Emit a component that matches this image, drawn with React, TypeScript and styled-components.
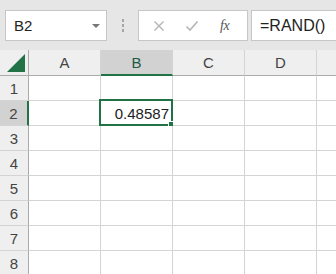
import React from "react";
import styled, { createGlobalStyle } from "styled-components";

const Global = createGlobalStyle`
  html, body { margin: 0; padding: 0; background: #ffffff; overflow: hidden; }
  body { font-family: "Liberation Sans", "Noto Sans CJK JP", sans-serif; }
`;

const Page = styled.div`
  width: 336px;
  height: 274px;
  overflow: hidden;
  display: flex;
  flex-direction: column;
`;

const TopBar = styled.div`
  height: 50px;
  flex: none;
  background: #e6e6e6;
  display: flex;
  align-items: flex-start;
  padding-top: 10px;
  padding-left: 5px;
  box-sizing: border-box;
`;

const NameBox = styled.div`
  width: 102px;
  height: 31px;
  box-sizing: border-box;
  background: #fff;
  border: 1px solid #c6c6c6;
  display: flex;
  align-items: center;
  justify-content: space-between;
  padding: 0 6px 0 8px;
  font-size: 15px;
  color: #222;
`;

const Caret = styled.span`
  width: 0;
  height: 0;
  border-left: 4px solid transparent;
  border-right: 4px solid transparent;
  border-top: 4px solid #777;
`;

const Grip = styled.div`
  width: 31px;
  height: 31px;
  display: flex;
  flex-direction: column;
  align-items: center;
  justify-content: center;
  gap: 2px;
`;

const Dot = styled.span`
  width: 2px;
  height: 3px;
  background: #a6a6a6;
`;

const ActionBox = styled.div`
  width: 110px;
  height: 31px;
  box-sizing: border-box;
  background: #fff;
  border: 1px solid #c6c6c6;
  display: flex;
  align-items: center;
  justify-content: space-around;
  padding: 0 6px 0 4px;
`;

const IconSlot = styled.span`
  width: 24px;
  display: flex;
  justify-content: center;
  align-items: center;
`;

const Fx = styled.span`
  font-family: "Liberation Serif", serif;
  font-style: italic;
  font-size: 14px;
  color: #555;
  letter-spacing: -0.5px;
`;

const FormulaBox = styled.div`
  flex: 1;
  height: 31px;
  margin-left: 3px;
  box-sizing: border-box;
  background: #fff;
  border: 1px solid #c6c6c6;
  border-right: none;
  display: flex;
  align-items: center;
  padding-left: 8px;
  font-size: 16px;
  color: #222;
`;

const Grid = styled.div`
  display: grid;
  grid-template-columns: 29px 72px 72px 72px 72px 72px;
  grid-auto-rows: 25px;
  grid-template-rows: 26px;
`;

const Corner = styled.div`
  background: #efefef;
  border-right: 1px solid #ababab;
  border-bottom: 1px solid #ababab;
  box-sizing: border-box;
  display: flex;
  align-items: flex-end;
  justify-content: flex-end;
  padding: 0 3px 3px 0;
`;

const ColHead = styled.div<{ $sel?: boolean }>`
  box-sizing: border-box;
  background: ${(p) => (p.$sel ? "#d2d2d2" : "#efefef")};
  border-right: 1px solid #d4d4d4;
  border-bottom: ${(p) => (p.$sel ? "2px solid #217346" : "1px solid #ababab")};
  display: flex;
  align-items: center;
  justify-content: center;
  font-size: 15px;
  color: ${(p) => (p.$sel ? "#1d5a45" : "#444")};
  padding-top: ${(p) => (p.$sel ? "1px" : "0")};
`;

const RowHead = styled.div<{ $sel?: boolean }>`
  box-sizing: border-box;
  background: ${(p) => (p.$sel ? "#d2d2d2" : "#efefef")};
  border-right: ${(p) => (p.$sel ? "2px solid #217346" : "1px solid #ababab")};
  border-bottom: 1px solid #d4d4d4;
  display: flex;
  align-items: center;
  justify-content: center;
  font-size: 15px;
  color: #444;
`;

const Cell = styled.div`
  position: relative;
  box-sizing: border-box;
  background: #fff;
  border-right: 1px solid #d4d4d4;
  border-bottom: 1px solid #d4d4d4;
  display: flex;
  align-items: center;
  justify-content: flex-end;
  padding-right: 3px;
  font-size: 15px;
  color: #222;
`;

const Selection = styled.div`
  position: absolute;
  left: -2px;
  top: -2px;
  right: -1px;
  bottom: -1px;
  border: 2px solid #217346;
  pointer-events: none;
`;

const Handle = styled.div`
  position: absolute;
  right: -4px;
  bottom: -4px;
  width: 5px;
  height: 5px;
  background: #217346;
  border: 1px solid #fff;
`;

const Value = styled.span`
  position: relative;
  z-index: 1;
`;

const cols = ["A", "B", "C", "D", ""];
const rows = [1, 2, 3, 4, 5, 6, 7, 8];

export default function App() {
  return (
    <Page>
      <Global />
      <TopBar>
        <NameBox>
          <span>B2</span>
          <Caret />
        </NameBox>
        <Grip>
          <Dot />
          <Dot />
          <Dot />
        </Grip>
        <ActionBox>
          <IconSlot>
            <svg width="12" height="12" viewBox="0 0 12 12">
              <path d="M1.5 1.5 L10.5 10.5 M10.5 1.5 L1.5 10.5" stroke="#b5b5b5" strokeWidth="1.4" fill="none" />
            </svg>
          </IconSlot>
          <IconSlot>
            <svg width="14" height="12" viewBox="0 0 14 12">
              <path d="M1.5 6.5 L5 10 L12.5 1.5" stroke="#b5b5b5" strokeWidth="1.6" fill="none" />
            </svg>
          </IconSlot>
          <IconSlot>
            <Fx>fx</Fx>
          </IconSlot>
        </ActionBox>
        <FormulaBox>=RAND()</FormulaBox>
      </TopBar>
      <Grid>
        <Corner>
          <svg width="18" height="18" viewBox="0 0 18 18">
            <polygon points="18,0 18,18 0,18" fill="#217346" />
          </svg>
        </Corner>
        {cols.map((c, i) => (
          <ColHead key={"h" + i} $sel={c === "B"}>
            {c}
          </ColHead>
        ))}
        {rows.map((r) => (
          <React.Fragment key={r}>
            <RowHead $sel={r === 2}>{r}</RowHead>
            {cols.map((c, i) => {
              const sel = r === 2 && c === "B";
              return (
                <Cell key={c + i}>
                  {sel && (
                    <>
                      <Value>0.48587</Value>
                      <Selection>
                        <Handle />
                      </Selection>
                    </>
                  )}
                </Cell>
              );
            })}
          </React.Fragment>
        ))}
      </Grid>
    </Page>
  );
}
